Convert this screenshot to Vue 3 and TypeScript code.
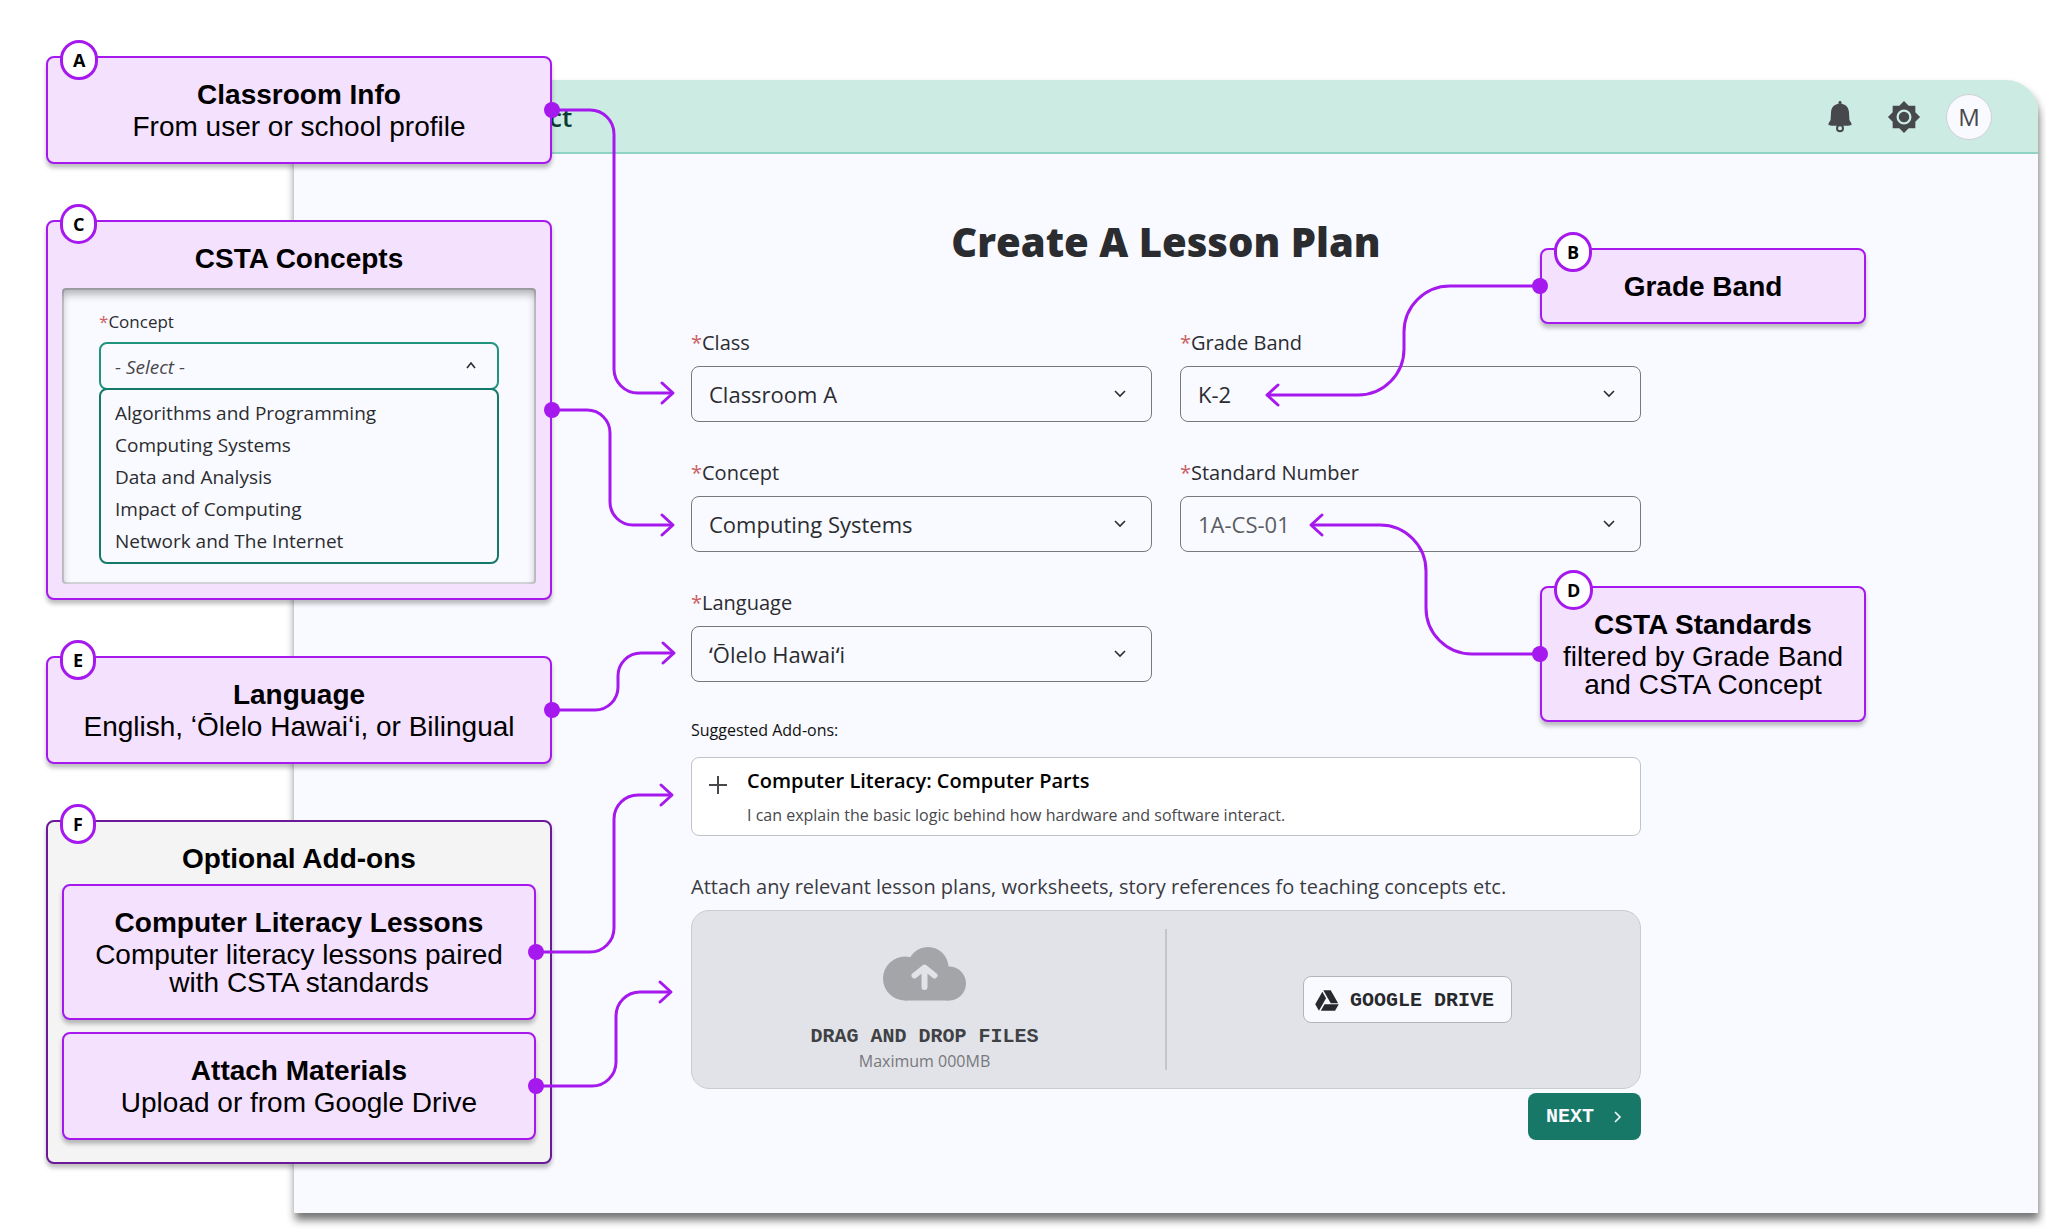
<script setup lang="ts">
import { ref } from 'vue'

interface Field {
  id: string
  label: string
  value: string
  muted?: boolean
}

interface Connector {
  id: string
  dot: [number, number]
  line: string
  head: string
}

const fields: Field[] = [
  { id: 'class', label: 'Class', value: 'Classroom A' },
  { id: 'grade-band', label: 'Grade Band', value: 'K-2' },
  { id: 'concept', label: 'Concept', value: 'Computing Systems' },
  { id: 'standard', label: 'Standard Number', value: '1A-CS-01', muted: true },
  { id: 'language', label: 'Language', value: 'ʻŌlelo Hawaiʻi' },
]

const concepts: string[] = [
  'Algorithms and Programming',
  'Computing Systems',
  'Data and Analysis',
  'Impact of Computing',
  'Network and The Internet',
]

const connectors: Connector[] = [
  {
    id: 'class',
    dot: [552, 110],
    line: 'M552 110H590A24 24 0 0 1 614 134V369A24 24 0 0 0 638 393H672',
    head: 'M662 383L673 393L662 403',
  },
  {
    id: 'concept',
    dot: [552, 410],
    line: 'M552 410H587A23 23 0 0 1 610 433V502A23 23 0 0 0 633 525H672',
    head: 'M662 515L673 525L662 535',
  },
  {
    id: 'language',
    dot: [552, 710],
    line: 'M552 710H595A23 23 0 0 0 618 687V676A23 23 0 0 1 641 653H673',
    head: 'M663 643L674 653L663 663',
  },
  {
    id: 'literacy',
    dot: [536, 952],
    line: 'M536 952H590A24 24 0 0 0 614 928V819A24 24 0 0 1 638 795H671',
    head: 'M661 785L672 795L661 805',
  },
  {
    id: 'attach',
    dot: [536, 1086],
    line: 'M536 1086H592A24 24 0 0 0 616 1062V1016A24 24 0 0 1 640 992H670',
    head: 'M660 982L671 992L660 1002',
  },
  {
    id: 'grade',
    dot: [1540, 286],
    line: 'M1540 286H1450A46 46 0 0 0 1404 332V349A46 46 0 0 1 1358 395H1268',
    head: 'M1278 385L1267 395L1278 405',
  },
  {
    id: 'standard',
    dot: [1540, 654],
    line: 'M1540 654H1472A46 46 0 0 1 1426 608V571A46 46 0 0 0 1380 525H1312',
    head: 'M1322 515L1311 525L1322 535',
  },
]

const files = ref<FileList | null>(null)
const onFiles = (e: Event) => {
  files.value = (e.target as HTMLInputElement).files
}
</script>

<template>
  <div class="page">
    <div class="window">
      <header class="topbar">
        <span class="brand">ct</span>
        <nav class="actions" aria-label="Account">
          <button type="button" class="icon-button" aria-label="Notifications">
            <svg width="24" height="32" viewBox="0 0 24 32">
              <path
                fill="#47484c"
                d="M12 0c1 0 1.500.700 1.500 1.600v1.200c4.500.700 7.300 4 7.500 8.600l.400 7.200c.100 1.800 2.200 2.800 2.200 4.600 0 1.300-1.800 1.600-11.600 1.600S.400 24.500.400 23.200c0-1.800 2.100-2.800 2.200-4.600l.400-7.200c.200-4.600 3-7.900 7.500-8.600V1.600C10.500.700 11 0 12 0z"
              />
              <circle cx="12" cy="27.200" r="3" fill="#ccece3" stroke="#47484c" stroke-width="2" />
            </svg>
          </button>
          <button type="button" class="icon-button" aria-label="Settings">
            <svg width="34" height="34" viewBox="0 0 24 24">
              <path
                fill="#47484c"
                d="M20 8.690V4h-4.690L12 .690 8.690 4H4v4.690L.690 12 4 15.310V20h4.690L12 23.310 15.310 20H20v-4.690L23.310 12z"
              />
              <circle cx="12" cy="12" r="4.500" fill="#47484c" stroke="#ccece3" stroke-width="1.600" />
            </svg>
          </button>
          <button type="button" class="avatar">M</button>
        </nav>
      </header>

      <main class="content">
        <h1 class="title">Create A Lesson Plan</h1>

        <form class="form" @submit.prevent>
          <div class="fields">
            <div v-for="f in fields" :key="f.id" class="field">
              <label class="label" :for="f.id"><span class="star">*</span>{{ f.label }}</label>
              <div class="select-wrap">
                <select :id="f.id" class="select" :class="{ muted: f.muted }">
                  <option>{{ f.value }}</option>
                </select>
                <svg class="chevron" width="14" height="10" viewBox="0 0 14 10">
                  <path d="M2 2L7 7L12 2" fill="none" stroke="#2b2c30" stroke-width="1.600" />
                </svg>
              </div>
            </div>
          </div>

          <h2 class="addons-title">Suggested Add-ons:</h2>
          <div class="addon">
            <button type="button" class="plus" aria-label="Add Computer Parts">
              <svg width="18" height="18" viewBox="0 0 18 18">
                <path d="M9 0V18M0 9H18" stroke="#47484c" stroke-width="2" />
              </svg>
            </button>
            <div class="addon-text">
              <h3>Computer Literacy: Computer Parts</h3>
              <p>I can explain the basic logic behind how hardware and software interact.</p>
            </div>
          </div>

          <p class="attach-label">
            Attach any relevant lesson plans, worksheets, story references fo teaching concepts etc.
          </p>
          <div class="dropzone">
            <label class="drop-half drop-files">
              <input class="file-input" type="file" multiple @change="onFiles" />
              <svg class="cloud" width="83" height="54" viewBox="0 0 83 54">
                <g fill="#a4a5a9">
                  <circle cx="22" cy="31.500" r="22" />
                  <circle cx="45" cy="20.500" r="20.500" />
                  <circle cx="66" cy="36.500" r="17" />
                  <path d="M22 25H66V53.500H22z" />
                </g>
                <path
                  d="M41.500 40V21M31.500 28.500L41.500 20.500L51.500 28.500"
                  fill="none"
                  stroke="#e2e3e8"
                  stroke-width="6"
                  stroke-linecap="round"
                  stroke-linejoin="round"
                />
              </svg>
              <span class="drop-title">DRAG AND DROP FILES</span>
              <span class="drop-note">Maximum 000MB</span>
            </label>
            <div class="divider"></div>
            <div class="drop-half">
              <button type="button" class="drive">
                <svg width="26" height="26" viewBox="0 0 24 24" fill="#28292d">
                  <path d="M7.710 3.500L1.150 15l3.430 6 6.550-11.500z" />
                  <path d="M9.730 15L6.300 21h13.120l3.430-6z" />
                  <path d="M22.280 14L15.420 2H8.580l6.860 12z" />
                </svg>
                GOOGLE DRIVE
              </button>
            </div>
          </div>

          <button type="submit" class="next">
            NEXT
            <svg width="10" height="14" viewBox="0 0 10 14">
              <path d="M2 2L7 7L2 12" fill="none" stroke="#f9faff" stroke-width="1.600" />
            </svg>
          </button>
        </form>
      </main>
    </div>

    <aside class="notes notes-left">
      <section class="card">
        <span class="badge">A</span>
        <h2>Classroom Info</h2>
        <p>From user or school profile</p>
      </section>

      <section class="card card-concepts">
        <span class="badge">C</span>
        <h2>CSTA Concepts</h2>
        <div class="panel">
          <label class="panel-label" for="concept-open"><span class="star">*</span>Concept</label>
          <div class="select-wrap">
            <select id="concept-open" class="panel-select">
              <option>- Select -</option>
            </select>
            <svg class="chevron panel-chevron" width="12" height="10" viewBox="0 0 12 10">
              <path d="M2 7L6 2L10 7" fill="none" stroke="#2b2c30" stroke-width="1.600" />
            </svg>
          </div>
          <ul class="menu" role="listbox">
            <li v-for="c in concepts" :key="c" role="option">{{ c }}</li>
          </ul>
        </div>
      </section>

      <section class="card">
        <span class="badge">E</span>
        <h2>Language</h2>
        <p>English, ʻŌlelo Hawaiʻi, or Bilingual</p>
      </section>

      <section class="card card-group">
        <span class="badge">F</span>
        <h2>Optional Add-ons</h2>
        <div class="card">
          <h2>Computer Literacy Lessons</h2>
          <p>Computer literacy lessons paired<br />with CSTA standards</p>
        </div>
        <div class="card">
          <h2>Attach Materials</h2>
          <p>Upload or from Google Drive</p>
        </div>
      </section>
    </aside>

    <aside class="notes notes-right">
      <section class="card">
        <span class="badge">B</span>
        <h2>Grade Band</h2>
      </section>
      <section class="card">
        <span class="badge">D</span>
        <h2>CSTA Standards</h2>
        <p>filtered by Grade Band<br />and CSTA Concept</p>
      </section>
    </aside>

    <svg class="connectors" width="2046" height="1229" viewBox="0 0 2046 1229" aria-hidden="true">
      <g v-for="c in connectors" :key="c.id">
        <path :d="c.line" />
        <path :d="c.head" />
        <circle :cx="c.dot[0]" :cy="c.dot[1]" r="8" />
      </g>
    </svg>
  </div>
</template>

<style>
body {
  margin: 0;
  background: #fff;
}
</style>

<style scoped>
.page,
.page * {
  box-sizing: border-box;
}

.page {
  position: relative;
  display: grid;
  grid-template-columns: minmax(0, 1fr);
  font-family: 'Open Sans', 'Noto Sans', sans-serif;
  color: #2b2c30;
  overflow: hidden;
}

.window,
.notes {
  grid-area: 1 / 1;
}

h1,
h2,
h3,
p,
ul {
  margin: 0;
  padding: 0;
}

button,
select {
  margin: 0;
  font: inherit;
  color: inherit;
}

/* Application window */
.window {
  margin: 80px 8px 16px 294px;
  background: #f9faff;
  border-radius: 0 32px 0 0;
  box-shadow: 1px 7px 8px rgba(0, 0, 0, 0.55);
}

.topbar {
  display: flex;
  align-items: center;
  justify-content: space-between;
  height: 74px;
  padding: 2px 46px 0 255px;
  background: #ccece3;
  border-bottom: 2px solid #8fd3c4;
  border-radius: 0 32px 0 0;
}

.brand {
  font-size: 26px;
  font-weight: 600;
  line-height: 32px;
  color: #0d3a32;
}

.actions {
  display: flex;
  align-items: center;
  gap: 20px;
}

.icon-button {
  display: flex;
  align-items: center;
  justify-content: center;
  width: 44px;
  height: 44px;
  padding: 0;
  border: 0;
  background: none;
}

.avatar {
  width: 46px;
  height: 46px;
  padding: 0;
  border: 1px solid #cfd0d6;
  border-radius: 50%;
  background: #f9faff;
  font-size: 24px;
  font-weight: 500;
  line-height: 44px;
  color: #47484c;
}

.content {
  display: flex;
  flex-direction: column;
  align-items: center;
  padding: 64px 0 73px;
}

.title {
  font-size: 40px;
  font-weight: 800;
  line-height: 48px;
}

.form {
  display: flex;
  flex-direction: column;
  width: 950px;
  margin-top: 62px;
}

.fields {
  display: grid;
  grid-template-columns: 1fr 1fr;
  gap: 36px 28px;
}

.field {
  display: flex;
  flex-direction: column;
  gap: 8px;
}

.label {
  font-size: 20px;
  line-height: 30px;
}

.star {
  color: #c9605f;
}

.select-wrap {
  display: grid;
  align-items: center;
}

.select-wrap > * {
  grid-area: 1 / 1;
}

.select {
  width: 100%;
  height: 56px;
  padding: 0 17px;
  appearance: none;
  border: 1px solid #77787c;
  border-radius: 8px;
  background: #f9faff;
  font-size: 22px;
}

.select.muted {
  color: #5c5d61;
}

.chevron {
  justify-self: end;
  margin-right: 25px;
  pointer-events: none;
}

.addons-title {
  margin-top: 36px;
  font-size: 16px;
  font-weight: 400;
  line-height: 24px;
  color: #111;
}

.addon {
  display: flex;
  gap: 20px;
  height: 79px;
  margin-top: 15px;
  padding: 9px 17px;
  background: #fff;
  border: 1px solid #c2c3c7;
  border-radius: 8px;
}

.plus {
  display: flex;
  align-items: center;
  height: 36px;
  padding: 0;
  border: 0;
  background: none;
}

.addon h3 {
  font-size: 20px;
  font-weight: 600;
  line-height: 28px;
  color: #000;
}

.addon p {
  margin-top: 8px;
  font-size: 16px;
  line-height: 24px;
  color: #47484c;
}

.attach-label {
  margin-top: 36px;
  font-size: 20px;
  line-height: 30px;
  color: #3a3b3f;
}

.dropzone {
  display: flex;
  height: 179px;
  margin-top: 8px;
  background: #e2e3e8;
  border: 1px solid #cbccd0;
  border-radius: 18px;
}

.drop-half {
  flex: 1;
  display: flex;
  flex-direction: column;
  align-items: center;
  justify-content: center;
}

.drop-files {
  justify-content: flex-start;
  padding-top: 36px;
}

.file-input {
  position: absolute;
  width: 1px;
  height: 1px;
  opacity: 0;
}

.drop-title {
  margin-top: 24px;
  font: bold 20px/24px 'Liberation Mono', monospace;
  color: #404145;
}

.drop-note {
  font-size: 16px;
  line-height: 24px;
  color: #77787c;
}

.divider {
  width: 2px;
  margin: 18px 8px;
  background: #c4c5c9;
}

.drive {
  display: flex;
  align-items: center;
  gap: 10px;
  height: 47px;
  padding: 2px 17px 0 10px;
  border: 1px solid #b4b5b9;
  border-radius: 8px;
  background: #f9faff;
  font: bold 20px/24px 'Liberation Mono', monospace;
  color: #28292d;
}

.next {
  display: flex;
  align-items: center;
  justify-content: space-between;
  align-self: flex-end;
  width: 113px;
  height: 47px;
  margin-top: 4px;
  padding: 0 18px;
  border: 0;
  border-radius: 8px;
  background: #187868;
  font: bold 20px/24px 'Liberation Mono', monospace;
  color: #f9faff;
}

/* Annotation cards */
.notes {
  display: flex;
  flex-direction: column;
  position: relative;
  pointer-events: none;
  font-family: 'Liberation Sans', Arial, sans-serif;
  color: #000;
}

.notes-left {
  justify-self: start;
  width: 506px;
  margin: 56px 0 0 46px;
  gap: 56px;
}

.notes-right {
  justify-self: end;
  width: 326px;
  margin: 248px 180px 0 0;
  gap: 262px;
}

.card {
  position: relative;
  padding: 23px 14px 21px;
  background: #f4e1fe;
  border: 2px solid #a619ee;
  border-radius: 8px;
  box-shadow: 0 4px 4px rgba(0, 0, 0, 0.25);
  font-size: 28px;
  line-height: 28px;
  text-align: center;
}

.card h2 {
  font-size: 28px;
  font-weight: 700;
  line-height: 28px;
}

.card p {
  margin-top: 4px;
  white-space: nowrap;
}

.card-group {
  padding-bottom: 22px;
  background: #f4f4f4;
  border-color: #6a1a99;
}

.card-group h2 + .card {
  margin-top: 11px;
}

.card + .card {
  margin-top: 12px;
}

.notes > .card {
  margin-top: 0;
}

.card-concepts {
  padding-bottom: 14px;
}

.badge {
  position: absolute;
  top: -18px;
  left: 12px;
  height: 40px;
  padding: 0 10px;
  background: #fff;
  border: 3px solid #a619ee;
  border-radius: 20px;
  font: bold 18px/34px 'Open Sans', 'Noto Sans', sans-serif;
}

.panel {
  margin-top: 15px;
  padding: 22px 37px 20px;
  background: #f9faff;
  border-radius: 4px;
  box-shadow:
    inset 0 0 0 2px rgba(0, 0, 0, 0.15),
    inset 0 6px 8px rgba(0, 0, 0, 0.3);
  font-family: 'Open Sans', 'Noto Sans', sans-serif;
  color: #2b2c30;
  text-align: left;
}

.panel-label {
  display: block;
  margin-bottom: 8px;
  font-size: 17px;
  line-height: 24px;
}

.panel-select {
  width: 100%;
  height: 48px;
  padding: 2px 14px 0;
  appearance: none;
  border: 2px solid #22937f;
  border-radius: 8px;
  background: #f9faff;
  font-size: 19px;
  font-style: italic;
  color: #47484c;
}

.panel-chevron {
  margin-right: 22px;
}

.menu {
  position: relative;
  margin-top: -2px;
  padding: 7px 14px 5px;
  list-style: none;
  border: 2px solid #15796a;
  border-radius: 8px;
  background: #f9faff;
  font-size: 19px;
  line-height: 32px;
}

/* Connector lines drawn over the whole board */
.connectors {
  position: absolute;
  top: 0;
  left: 0;
  pointer-events: none;
}

.connectors path {
  fill: none;
  stroke: #a619ee;
  stroke-width: 3;
  stroke-linecap: round;
  stroke-linejoin: round;
}

.connectors circle {
  fill: #a619ee;
}
</style>
